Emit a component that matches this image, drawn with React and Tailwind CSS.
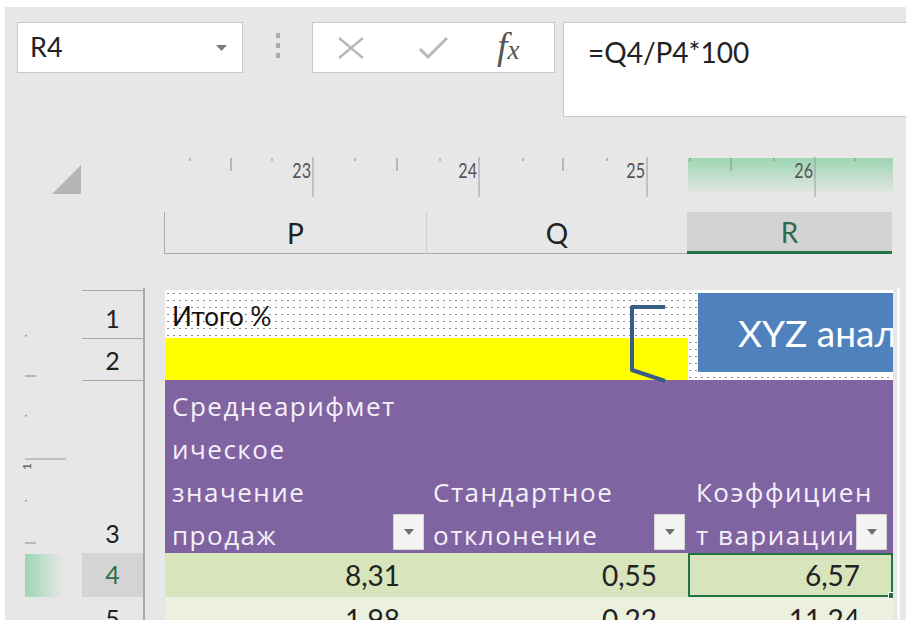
import React from 'react';

const cellFont = { fontFamily: 'Lato, "Open Sans", sans-serif' };
const headFont = { fontFamily: '"Open Sans", "Noto Sans", sans-serif' };

// ruler drawing above the column headers
const Ruler = () => {
    const dots = [25, 107, 190, 275, 358, 442, 525, 609, 690];
    const ticks = [66, 232, 398, 566];
    const marks = [
        { x: 148, n: 23 },
        { x: 314, n: 24 },
        { x: 482, n: 25 },
        { x: 650, n: 26 },
    ];
    return (
        <svg width="728" height="40" className="block">
            <defs>
                <linearGradient id="rulerGreen" x1="0" y1="0" x2="0" y2="1">
                    <stop offset="0" stopColor="#9dd6b2" />
                    <stop offset="1" stopColor="#e7e7e7" />
                </linearGradient>
            </defs>
            <rect x="523" y="1" width="205" height="37" fill="url(#rulerGreen)" />
            {dots.map((x) => (
                <line key={'d' + x} x1={x} x2={x} y1="1" y2="4" stroke="#8a8a8a" strokeWidth="1" />
            ))}
            {ticks.map((x) => (
                <line key={'t' + x} x1={x} x2={x} y1="1" y2="14" stroke="#8a8a8a" strokeWidth="1" />
            ))}
            {marks.map((m) => (
                <g key={m.n}>
                    <line x1={m.x} x2={m.x} y1="0" y2="40" stroke="#9a9a9a" strokeWidth="1" />
                    <text x={0} y={0} textAnchor="end" fontSize="19" fill="#555" fontFamily="Lato, sans-serif" transform={`translate(${m.x - 2} 21) scale(0.85 1.15)`}>
                        {m.n}
                    </text>
                </g>
            ))}
        </svg>
    );
};

// outline gutter on the far left
const Gutter = () => (
    <svg width="77" height="332" className="block shrink-0">
        <defs>
            <linearGradient id="gutterGreen" x1="0" y1="0" x2="1" y2="0">
                <stop offset="0" stopColor="#9dd6b2" />
                <stop offset="1" stopColor="#e7e7e7" />
            </linearGradient>
        </defs>
        <rect x="20" y="47" width="1.5" height="1.5" fill="#888" />
        <line x1="20" x2="31" y1="88" y2="88" stroke="#999" strokeWidth="1.2" />
        <rect x="20" y="127" width="1.5" height="1.5" fill="#888" />
        <line x1="20" x2="61" y1="171" y2="171" stroke="#999" strokeWidth="1.2" />
        <text x="0" y="0" fontSize="12" fill="#555" fontFamily="Lato, sans-serif" transform="translate(26 182) rotate(-90)">
            1
        </text>
        <rect x="20" y="212" width="1.5" height="1.5" fill="#888" />
        <line x1="20" x2="31" y1="255" y2="255" stroke="#999" strokeWidth="1.2" />
        <rect x="20" y="266" width="38" height="43" fill="url(#gutterGreen)" />
    </svg>
);

const FilterBtn = ({ className }) => (
    <div className={`w-[31px] h-[36px] bg-[#f3f3f3] border border-[#d6d6d6] flex items-center justify-center shrink-0 ${className}`}>
        <svg width="10" height="6" viewBox="0 0 10 6">
            <path d="M0 0 L10 0 L5 6 Z" fill="#707070" />
        </svg>
    </div>
);

const App = () => {
    return (
        <div className="w-[906px] h-[635px] bg-white overflow-hidden">
            <div className="ml-[5px] mt-[7px] h-[613px] bg-[#e7e7e7] flex flex-col overflow-hidden">
                {/* formula bar */}
                <div className="flex items-start pl-3 pt-[15px] h-[150px] shrink-0">
                    <div className="w-[226px] h-[51px] bg-white border border-[#c8c8c8] flex items-center justify-between pl-[12px] pr-[15px]">
                        <span className="text-[27px] text-[#222]" style={cellFont}>R4</span>
                        <svg width="11" height="6" viewBox="0 0 11 6">
                            <path d="M0 0 L11 0 L5.5 6 Z" fill="#7a7a7a" />
                        </svg>
                    </div>
                    <div className="ml-[33px] mt-[11px] flex flex-col gap-[5px]">
                        <div className="w-[4px] h-[5px] bg-[#aaa]" />
                        <div className="w-[4px] h-[5px] bg-[#aaa]" />
                        <div className="w-[4px] h-[5px] bg-[#aaa]" />
                    </div>
                    <div className="ml-[32px] w-[243px] h-[51px] bg-white border border-[#c8c8c8] flex items-center">
                        <svg width="28" height="24" viewBox="0 0 28 24" className="ml-[24px]">
                            <path d="M2 2 L26 22 M26 2 L2 22" stroke="#b8b8b8" strokeWidth="2.4" fill="none" />
                        </svg>
                        <svg width="31" height="25" viewBox="0 0 31 25" className="ml-[53px]">
                            <path d="M2 14 L10 22 L29 3" stroke="#b8b8b8" strokeWidth="3" fill="none" />
                        </svg>
                        <span className="ml-[48px] text-[38px] italic text-[#555] leading-none -mt-[4px] whitespace-nowrap" style={{ fontFamily: '"Liberation Serif", serif' }}>
                            f<span className="text-[27px]">x</span>
                        </span>
                    </div>
                    <div className="ml-[8px] flex-1 h-[95px] bg-white border border-r-0 border-[#c8c8c8] pl-[24px] pt-[8px]">
                        <span className="text-[28px] text-[#222]" style={cellFont}>=Q4/P4*100</span>
                    </div>
                </div>

                {/* ruler */}
                <div className="flex h-[40px] shrink-0">
                    <div className="w-[160px] pt-[8px] pl-[47px]">
                        <svg width="30" height="30" viewBox="0 0 30 30">
                            <path d="M29 0 L29 29 L0 29 Z" fill="#b5b5b5" />
                        </svg>
                    </div>
                    <Ruler />
                </div>

                <div className="h-[15px] shrink-0" />

                {/* column headers */}
                <div className="flex h-[42px] ml-[159px] shrink-0 text-[28px] text-[#222]" style={cellFont}>
                    <div className="w-[262px] border-l border-b border-[#ababab] flex items-center justify-center">P</div>
                    <div className="w-[261px] border-l border-b border-l-[#cfcfcf] border-b-[#ababab] flex items-center justify-center">Q</div>
                    <div className="w-[205px] bg-[#d3d3d3] border-b-[3px] border-[#217346] flex items-center justify-center text-[#2c6e49]">R</div>
                </div>

                <div className="h-[34px] shrink-0" />

                {/* sheet */}
                <div className="flex flex-1 min-h-0">
                    <Gutter />
                    <div className="w-[63px] shrink-0 border-r-2 border-[#a9a9a9] flex flex-col pt-[2px] text-[25px] text-[#222]" style={cellFont}>
                        <div className="h-[48px] shrink-0 border-t border-[#a9a9a9] flex items-end justify-center pb-[1px]">1</div>
                        <div className="h-[42px] shrink-0 border-t border-[#a9a9a9] flex items-end justify-center pb-[1px]">2</div>
                        <div className="h-[173px] shrink-0 border-t border-[#a9a9a9] flex items-end justify-center pb-[1px]">3</div>
                        <div className="h-[44px] shrink-0 bg-[#d4d4d4] flex items-center justify-center text-[#2c6e49]">4</div>
                        <div className="h-[44px] shrink-0 flex items-center justify-center">5</div>
                    </div>
                    <div className="w-[20px] shrink-0" />
                    <div className="w-[728px] shrink-0 pt-[2px] flex flex-col overflow-hidden">
                        {/* rows 1-2 */}
                        <div className="relative h-[90px] shrink-0 bg-white bg-[radial-gradient(circle,#8a8a8a_0.8px,transparent_1.1px)] bg-[length:6px_7px]">
                            <div className="h-[48px] flex items-end pb-[2px] pl-[7px] text-[26px] text-[#111]" style={cellFont}>Итого %</div>
                            <div className="h-[42px] w-[523px] bg-[#ffff00]" />
                            <div className="absolute left-[533px] top-[3px] h-[79px] w-[290px] bg-[#4f81bd] flex items-center pl-[40px] text-[37px] text-white whitespace-nowrap" style={cellFont}>
                                XYZ анализ
                            </div>
                            <svg width="520" height="95" className="absolute left-0 top-0">
                                <path d="M500 17 L467 17 L467 80 L500 91" stroke="#3a5d88" strokeWidth="4" fill="none" strokeLinejoin="round" />
                            </svg>
                        </div>

                        {/* row 3: header */}
                        <div className="h-[173px] shrink-0 bg-[#8064a2] flex text-[26px] leading-[43px] text-[#f4f0f8] tracking-[1.5px]" style={headFont}>
                            <div className="w-[262px] flex items-end justify-between pl-[7px]">
                                <div className="flex-1 min-w-0 whitespace-nowrap translate-y-[4px]">
                                    Среднеарифмет<br />ическое<br />значение<br />продаж
                                </div>
                                <FilterBtn className="mb-[3px] mr-[3px]" />
                            </div>
                            <div className="w-[261px] flex items-end justify-between pl-[6px]">
                                <div className="flex-1 min-w-0 whitespace-nowrap translate-y-[4px]">
                                    Стандартное<br />отклонение
                                </div>
                                <FilterBtn className="mb-[3px] mr-[3px]" />
                            </div>
                            <div className="w-[205px] flex items-end justify-between pl-[8px]">
                                <div className="flex-1 min-w-0 whitespace-nowrap translate-y-[4px]">
                                    Коэффициен<br />т вариации
                                </div>
                                <FilterBtn className="mb-[3px] mr-[6px]" />
                            </div>
                        </div>

                        {/* row 4 */}
                        <div className="h-[44px] shrink-0 bg-[#d8e4bc] flex text-[28px] text-[#222]" style={cellFont}>
                            <div className="w-[262px] flex items-center justify-end pr-[27px]">8,31</div>
                            <div className="w-[261px] flex items-center justify-end pr-[31px]">0,55</div>
                            <div className="w-[205px] relative border-2 border-[#217346] flex items-center justify-end pr-[31px]">
                                6,57
                                <div className="absolute -right-[4px] -bottom-[4px] w-[7px] h-[7px] bg-[#217346] border border-white" />
                            </div>
                        </div>

                        {/* row 5 */}
                        <div className="h-[44px] shrink-0 bg-[#ebf1de] flex text-[28px] text-[#222]" style={cellFont}>
                            <div className="w-[262px] flex items-center justify-end pr-[27px]">1,98</div>
                            <div className="w-[261px] flex items-center justify-end pr-[31px]">0,22</div>
                            <div className="w-[205px] flex items-center justify-end pr-[33px]">11,24</div>
                        </div>
                    </div>
                    <div className="w-[4px] shrink-0" />
                    <div className="w-[3px] shrink-0 bg-[#f7f7f7]" />
                </div>
            </div>
        </div>
    );
};

export default App;
